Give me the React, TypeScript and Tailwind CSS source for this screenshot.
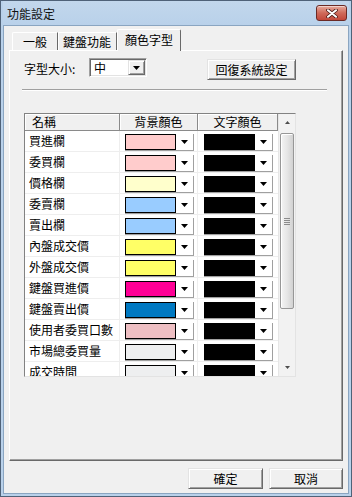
import React from "react";

const rows: { name: string; bg: string }[] = [
  { name: "買進欄", bg: "bg-[#ffcccc]" },
  { name: "委買欄", bg: "bg-[#ffcccc]" },
  { name: "價格欄", bg: "bg-[#ffffcc]" },
  { name: "委賣欄", bg: "bg-[#99ccff]" },
  { name: "賣出欄", bg: "bg-[#99ccff]" },
  { name: "內盤成交價", bg: "bg-[#ffff66]" },
  { name: "外盤成交價", bg: "bg-[#ffff66]" },
  { name: "鍵盤買進價", bg: "bg-[#ff0096]" },
  { name: "鍵盤賣出價", bg: "bg-[#0079c2]" },
  { name: "使用者委買口數", bg: "bg-[#eebfc3]" },
  { name: "市場總委買量", bg: "bg-[#eeeff0]" },
  { name: "成交時間", bg: "bg-[#eeeff0]" },
];

function Tri({ up = false, color = "#000", w = 7, h = 4 }: { up?: boolean; color?: string; w?: number; h?: number }) {
  const pts = up ? `0,${h} ${w},${h} ${w / 2},0` : `0,0 ${w},0 ${w / 2},${h}`;
  return (
    <svg width={w} height={h} viewBox={`0 0 ${w} ${h}`} className="block">
      <polygon points={pts} fill={color} />
    </svg>
  );
}

function ColorCombo({ swatch }: { swatch: string }) {
  return (
    <div className="flex h-[17px] w-[69px] border-r border-b border-[#a0a0a0]">
      <div className={`h-[16px] w-[51px] border border-black ${swatch}`} />
      <div className="flex flex-1 items-center justify-center">
        <Tri />
      </div>
    </div>
  );
}

function WinButton({ children, w }: { children: React.ReactNode; w: string }) {
  return (
    <div
      className={`${w} flex h-[21px] items-center justify-center border border-t-[#e3e3e3] border-l-[#e3e3e3] border-r-[#696969] border-b-[#696969] bg-[#f0f0f0] shadow-[inset_1px_1px_0_#ffffff,inset_-1px_-1px_0_#a0a0a0]`}
    >
      {children}
    </div>
  );
}

export default function App() {
  return (
    <div className="flex h-[497px] w-[352px] flex-col border border-[#4f6278] bg-[#b9d1ea] px-[2px] pb-[2px] font-['Noto_Sans_CJK_TC','Noto_Sans',sans-serif] text-[12px] leading-[12px] text-black">
      {/* Title bar */}
      <div className="flex h-[24px] items-center bg-gradient-to-b from-[#c2d7ec] to-[#b9d1ea] pl-[4px] pr-[2px]">
        <span className="flex-1 pt-[2px] text-[#111]">功能設定</span>
        <div className="flex h-[16px] w-[31px] items-center justify-center rounded-[3px] border border-[#6b2a25] bg-gradient-to-b from-[#e6a99c] via-[#cf6a5a] to-[#c2473a] shadow-[inset_0_1px_0_rgba(255,255,255,0.5)]">
          <svg width="12" height="9" viewBox="0 0 12 9" className="block">
            <path d="M2 1.2 L10 7.8 M10 1.2 L2 7.8" stroke="#4a1a16" strokeWidth="3.6" strokeLinecap="round" />
            <path d="M2 1.2 L10 7.8 M10 1.2 L2 7.8" stroke="#ffffff" strokeWidth="2" strokeLinecap="round" />
          </svg>
        </div>
      </div>

      {/* Client */}
      <div className="flex flex-1 flex-col border border-[#8aa5c1] bg-[#f0f0f0] px-[5px] pt-[3px] pb-[4px]">
        {/* Tabs */}
        <div className="flex h-[21px] items-end pl-[3px]">
          <div className="flex h-[18px] w-[46px] items-center justify-center rounded-tl-[2px] border-t border-l border-r border-t-white border-l-white border-r-[#696969]">
            一般
          </div>
          <div className="flex h-[18px] w-[59px] items-center justify-center border-t border-r border-t-white border-r-[#696969] shadow-[inset_1px_0_0_#ffffff]">
            鍵盤功能
          </div>
          <div className="relative z-10 -mb-[1px] flex h-[22px] w-[64px] items-center justify-center rounded-t-[2px] border-t border-l border-r border-t-white border-l-white border-r-[#696969] bg-[#f0f0f0] pb-[2px]">
            顏色字型
          </div>
        </div>

        {/* Panel */}
        <div className="flex h-[411px] flex-col border border-t-white border-l-white border-r-[#696969] border-b-[#696969] pl-[14px] pt-[7px] shadow-[inset_-1px_-1px_0_#a0a0a0]">
          {/* Row 1 */}
          <div className="flex h-[21px] items-start">
            <div className="flex h-[19px] w-[65px] items-center pt-[3px]">字型大小:</div>
            <div className="flex h-[19px] w-[58px] border border-t-[#a0a0a0] border-l-[#a0a0a0] border-r-white border-b-white bg-white shadow-[inset_1px_1px_0_#696969,inset_-1px_-1px_0_#e3e3e3] p-[1px]">
              <div className="flex flex-1 items-center pl-[3px] pt-[1px]">中</div>
              <div className="flex w-[17px] items-center justify-center border border-t-[#e3e3e3] border-l-[#e3e3e3] border-r-[#696969] border-b-[#696969] bg-[#f0f0f0] shadow-[inset_1px_1px_0_#ffffff,inset_-1px_-1px_0_#a0a0a0]">
                <Tri />
              </div>
            </div>
            <div className="ml-[60px] mt-[1px]">
              <WinButton w="w-[89px]">回復系統設定</WinButton>
            </div>
          </div>

          {/* Separator */}
          <div className="ml-[-2px] mt-[10px] h-[2px] w-[305px] border-t border-b border-t-[#a0a0a0] border-b-white" />

          {/* Table */}
          <div className="mt-[22px] flex h-[264px] w-[272px] border border-t-[#828282] border-l-[#828282] border-r-[#e3e3e3] border-b-[#e3e3e3] bg-white">
            <div className="flex w-[253px] flex-col overflow-hidden">
              <div className="flex h-[17px] shrink-0">
                <div className="flex w-[95px] items-center border-r border-b border-[#8a8a8a] bg-[#f0f0f0] pl-[7px] shadow-[inset_1px_1px_0_#ffffff]">
                  名稱
                </div>
                <div className="flex w-[78px] items-center justify-center border-r border-b border-[#8a8a8a] bg-[#f0f0f0] shadow-[inset_1px_1px_0_#ffffff]">
                  背景顏色
                </div>
                <div className="flex w-[80px] items-center justify-center border-r border-b border-[#8a8a8a] bg-[#f0f0f0] shadow-[inset_1px_1px_0_#ffffff]">
                  文字顏色
                </div>
              </div>
              {rows.map((r) => (
                <div key={r.name} className="flex h-[21px] shrink-0 border-b border-[#eeeeee]">
                  <div className="flex w-[95px] items-center border-r border-[#eeeeee] pl-[4px]">{r.name}</div>
                  <div className="w-[78px] border-r border-[#eeeeee] pl-[5px] pt-[3px]">
                    <ColorCombo swatch={r.bg} />
                  </div>
                  <div className="w-[80px] pl-[6px] pt-[3px]">
                    <ColorCombo swatch="bg-black" />
                  </div>
                </div>
              ))}
            </div>
            {/* Scrollbar */}
            <div className="flex w-[17px] flex-col border-l border-[#e6e6e6] bg-[#f2f2f2]">
              <div className="flex h-[17px] shrink-0 items-center justify-center">
                <Tri up color="#4d4d4d" w={5} h={3} />
              </div>
              <div className="flex-1 px-[1px] pt-[2px]">
                <div className="flex h-[176px] items-center justify-center rounded-[2px] border border-[#979797] bg-gradient-to-r from-[#f4f4f4] via-[#e6e6e6] to-[#d2d2d2] shadow-[inset_1px_1px_0_#ffffff]">
                  <div className="flex flex-col gap-[1px]">
                    <div className="h-[1px] w-[6px] bg-[#8c8c8c]" />
                    <div className="h-[1px] w-[6px] bg-[#8c8c8c]" />
                    <div className="h-[1px] w-[6px] bg-[#8c8c8c]" />
                    <div className="h-[1px] w-[6px] bg-[#8c8c8c]" />
                  </div>
                </div>
              </div>
              <div className="flex h-[17px] shrink-0 items-center justify-center">
                <Tri color="#4d4d4d" w={5} h={3} />
              </div>
            </div>
          </div>
        </div>

        {/* Bottom buttons */}
        <div className="mt-[7px] flex justify-end gap-[6px]">
          <WinButton w="w-[75px]">確定</WinButton>
          <WinButton w="w-[74px]">取消</WinButton>
        </div>
      </div>
    </div>
  );
}
